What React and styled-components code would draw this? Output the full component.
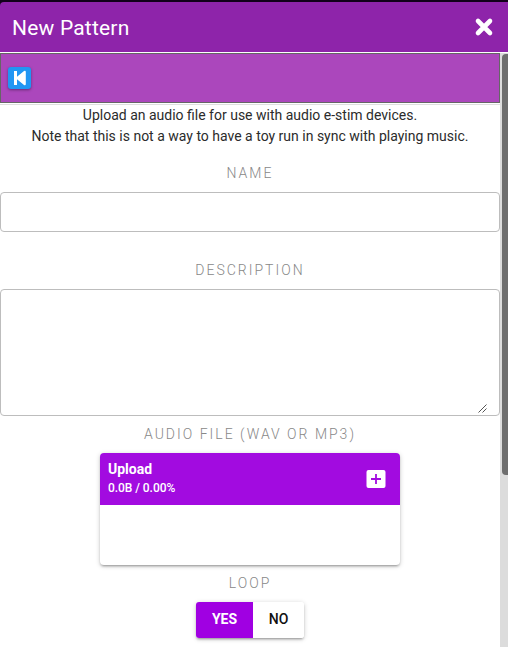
import React from "react";
import styled, { createGlobalStyle } from "styled-components";

const GlobalStyle = createGlobalStyle`
  * { box-sizing: border-box; }
  html, body { margin: 0; height: 100%; overflow: hidden; }
  body { font-family: Roboto, sans-serif; font-size: 14px; line-height: 21px; color: #2b2b2b; background: #fff; }
`;

const Modal = styled.div`
  height: 647px;
  width: 508px;
  display: flex;
  flex-direction: column;
  border-top: 2px solid #12001a;
  background: #fff;
  overflow: hidden;
`;

const HeaderFrame = styled.div`
  flex: none;
  background: #12001a;
`;

const Header = styled.header`
  height: 50px;
  padding: 0 14px 0 12px;
  display: flex;
  align-items: center;
  justify-content: space-between;
  background: #8e24aa;
  color: #fff;
  border-top-left-radius: 4px;
`;

const Title = styled.h1`
  margin: 0;
  padding-top: 2px;
  font-size: 21px;
  line-height: 24px;
  font-weight: 400;
  letter-spacing: 0.2px;
`;

const CloseButton = styled.button`
  width: 20px;
  height: 20px;
  padding: 0;
  border: 0;
  background: none;
  display: flex;
  align-items: center;
  justify-content: center;
`;

const Body = styled.div`
  flex: 1;
  min-height: 0;
  padding-top: 1px;
  display: flex;
`;

const Content = styled.main`
  width: 500px;
  display: flex;
  flex-direction: column;
  align-items: center;
`;

const ScrollTrack = styled.div`
  width: 8px;
  padding: 1px 0 0 2px;
  background: #dcdcdc;
`;

const ScrollThumb = styled.div`
  height: 421px;
  background: #6e6e6e;
  border-radius: 4px 0 0 4px;
`;

const Toolbar = styled.div`
  width: 500px;
  height: 50px;
  flex: none;
  padding: 0 7px;
  display: flex;
  align-items: center;
  background: #ab47bc;
  border: 1px solid #666;
`;

const BackButton = styled.button`
  width: 23px;
  height: 22px;
  padding: 0;
  border: 0;
  border-radius: 3px;
  background: #2196f3;
  display: flex;
  align-items: center;
  justify-content: center;
  box-shadow: 0 1px 3px rgba(0, 0, 0, 0.4);
`;

const Divider = styled.div`
  width: 500px;
  height: 1px;
  flex: none;
  margin-top: 1px;
  background: #dedede;
`;

const Intro = styled.p`
  margin: 0;
  text-align: center;
  line-height: 21px;
`;

const Label = styled.label`
  flex: none;
  height: 21px;
  margin-top: ${(p) => p.$gap}px;
  font-weight: 300;
  letter-spacing: 2px;
  color: #888;
  white-space: nowrap;
`;

const TextInput = styled.input`
  width: 500px;
  height: 40px;
  flex: none;
  margin-top: 8px;
  border: 1px solid #bdbdbd;
  border-radius: 4px;
  background: #fff;
`;

const TextAreaBox = styled.div`
  width: 500px;
  height: 127px;
  flex: none;
  margin-top: 8px;
  padding: 0 12px 2px 0;
  display: flex;
  align-items: flex-end;
  justify-content: flex-end;
  border: 1px solid #bdbdbd;
  border-radius: 4px;
`;

const Uploader = styled.section`
  width: 300px;
  height: 112px;
  flex: none;
  margin-top: 8px;
  border-radius: 4px;
  overflow: hidden;
  box-shadow: 0 1px 5px rgba(0, 0, 0, 0.2), 0 2px 2px rgba(0, 0, 0, 0.14), 0 3px 1px -2px rgba(0, 0, 0, 0.12);
`;

const UploadHeader = styled.div`
  height: 52px;
  padding: 0 14px 0 8px;
  display: flex;
  align-items: center;
  justify-content: space-between;
  background: #a20be0;
  color: #fff;
`;

const UploadInfo = styled.div`
  padding-bottom: 2px;
`;

const UploadTitle = styled.div`
  padding-bottom: 1px;
  font-weight: 700;
  line-height: 18px;
`;

const UploadStatus = styled.div`
  font-size: 12px;
  font-weight: 500;
  line-height: 18px;
  letter-spacing: -0.05px;
`;

const ToggleGroup = styled.div`
  height: 36px;
  flex: none;
  margin-top: 8px;
  display: flex;
  border-radius: 3px;
  overflow: hidden;
  box-shadow: 0 1px 5px rgba(0, 0, 0, 0.2), 0 2px 2px rgba(0, 0, 0, 0.14), 0 3px 1px -2px rgba(0, 0, 0, 0.12);
`;

const Toggle = styled.button`
  width: ${(p) => p.$width}px;
  padding: 0 0 2px;
  border: 0;
  font: 500 14px/24px Roboto, sans-serif;
  font-weight: ${(p) => (p.$active ? 700 : 500)};
  color: ${(p) => (p.$active ? "#fff" : "#111")};
  background: ${(p) => (p.$active ? "#a000e2" : "#fff")};
`;

export default function App() {
  return (
    <>
      <GlobalStyle />
      <Modal>
        <HeaderFrame>
          <Header>
            <Title>New Pattern</Title>
            <CloseButton aria-label="Close">
              <svg width="20" height="20" viewBox="0 0 20 20">
                <path d="M4 4 16 16M16 4 4 16" stroke="#fff" strokeWidth="4.6" strokeLinecap="round" />
              </svg>
            </CloseButton>
          </Header>
        </HeaderFrame>
        <Body>
          <Content>
            <Toolbar>
              <BackButton aria-label="Back">
                <svg width="14" height="16" viewBox="0 0 14 16" fill="#fff">
                  <path d="M1 1H4V6.8L11 1Q12.8 .2 12.8 2V14Q12.8 15.8 11 15L4 9.2V15H1Z" />
                </svg>
              </BackButton>
            </Toolbar>
            <Divider />
            <Intro>
              Upload an audio file for use with audio e-stim devices.
              <br />
              Note that this is not a way to have a toy run in sync with playing music.
            </Intro>
            <Label $gap={16}>NAME</Label>
            <TextInput aria-label="Name" />
            <Label $gap={28}>DESCRIPTION</Label>
            <TextAreaBox>
              <svg width="9" height="9" viewBox="0 0 9 9" stroke="#555" strokeWidth="1">
                <path d="M.5 8.5 8.5 .5M4.5 8.5 8.5 4.5" />
              </svg>
            </TextAreaBox>
            <Label $gap={8}>AUDIO FILE (WAV OR MP3)</Label>
            <Uploader>
              <UploadHeader>
                <UploadInfo>
                  <UploadTitle>Upload</UploadTitle>
                  <UploadStatus>0.0B / 0.00%</UploadStatus>
                </UploadInfo>
                <svg width="20" height="18" viewBox="0 0 20 18">
                  <rect x=".5" width="19" height="18" rx="2" fill="#fff" />
                  <path d="M5 9H15M10 4V14" stroke="#a20be0" strokeWidth="1.8" />
                </svg>
              </UploadHeader>
            </Uploader>
            <Label $gap={8}>LOOP</Label>
            <ToggleGroup>
              <Toggle $active $width={57}>YES</Toggle>
              <Toggle $width={51}>NO</Toggle>
            </ToggleGroup>
          </Content>
          <ScrollTrack>
            <ScrollThumb />
          </ScrollTrack>
        </Body>
      </Modal>
    </>
  );
}
